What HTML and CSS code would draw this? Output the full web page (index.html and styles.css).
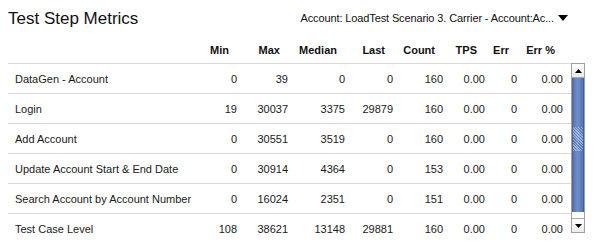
FILE: index.html
```html
<!DOCTYPE html>
<html>
<head>
<meta charset="utf-8">
<link rel="stylesheet" href="styles.css">
</head>
<body>
<div class="panel">
  <div class="top">
    <div class="title">Test Step Metrics</div>
    <div class="select">
      <span class="select-text">Account: LoadTest Scenario 3. Carrier - Account:Ac...</span>
      <svg class="caret" width="10" height="6" viewBox="0 0 10 6"><path d="M0 0H10L5 6Z" fill="#000"/></svg>
    </div>
  </div>
  <div class="head row">
    <div class="name"></div>
    <div>Min</div><div>Max</div><div>Median</div><div>Last</div><div>Count</div><div>TPS</div><div>Err</div><div>Err %</div>
  </div>
  <div class="body">
    <div class="rows">
      <div class="row data"><div class="name">DataGen - Account</div><div>0</div><div>39</div><div>0</div><div>0</div><div>160</div><div>0.00</div><div>0</div><div>0.00</div></div>
      <div class="row data"><div class="name">Login</div><div>19</div><div>30037</div><div>3375</div><div>29879</div><div>160</div><div>0.00</div><div>0</div><div>0.00</div></div>
      <div class="row data"><div class="name">Add Account</div><div>0</div><div>30551</div><div>3519</div><div>0</div><div>160</div><div>0.00</div><div>0</div><div>0.00</div></div>
      <div class="row data"><div class="name">Update Account Start &amp; End Date</div><div>0</div><div>30914</div><div>4364</div><div>0</div><div>153</div><div>0.00</div><div>0</div><div>0.00</div></div>
      <div class="row data"><div class="name">Search Account by Account Number</div><div>0</div><div>16024</div><div>2351</div><div>0</div><div>151</div><div>0.00</div><div>0</div><div>0.00</div></div>
      <div class="row data"><div class="name">Test Case Level</div><div>108</div><div>38621</div><div>13148</div><div>29881</div><div>160</div><div>0.00</div><div>0</div><div>0.00</div></div>
    </div>
    <div class="scrollbar">
      <div class="sb-btn"><svg width="7" height="4" viewBox="0 0 7 4"><path d="M0 4H7L3.5 0Z" fill="#000"/></svg></div>
      <div class="sb-thumb"><div class="grip"></div></div>
      <div class="sb-track"></div>
      <div class="sb-btn"><svg width="7" height="4" viewBox="0 0 7 4"><path d="M0 0H7L3.5 4Z" fill="#000"/></svg></div>
    </div>
  </div>
</div>
</body>
</html>
```

FILE: styles.css
```css
html, body {
  margin: 0;
  padding: 0;
  background: #fff;
}
.panel {
  width: 599px;
  height: 249px;
  overflow: hidden;
  font-family: "Liberation Sans", Arial, sans-serif;
  color: #1a1a1a;
}
.top {
  display: flex;
  justify-content: space-between;
  align-items: center;
  height: 36px;
  padding: 0 31px 0 8px;
}
.title {
  font-size: 17px;
  color: #111;
  padding-top: 1px;
}
.select {
  display: flex;
  align-items: center;
  gap: 4px;
  font-size: 11px;
  color: #111;
}
.select-text {
  letter-spacing: -0.12px;
}
.caret {
  display: block;
}
.row {
  display: grid;
  grid-template-columns: 182px 40px 51px 57px 48px 50px 42px 32px 46px;
  width: 547px;
  padding: 0 9px 0 7px;
  font-size: 11px;
}
.row > div {
  text-align: right;
  white-space: nowrap;
}
.row > .name {
  text-align: left;
}
.head {
  font-weight: bold;
  height: 27px;
  align-items: center;
  color: #111;
}
.body {
  display: flex;
  margin-left: 8px;
  width: 578px;
}
.rows {
  width: 563px;
}
.data {
  height: 29px;
  align-items: center;
  border-top: 1px solid #d9d9d9;
  padding-left: 7px;
  margin: 0;
  width: 547px;
}
.data > div {
  padding-top: 1px;
}
.scrollbar {
  width: 14px;
  height: 170px;
  display: flex;
  flex-direction: column;
  border: 1px solid #a0a0a0;
  box-sizing: border-box;
  background: #fff;
}
.sb-btn {
  height: 13px;
  display: flex;
  align-items: center;
  justify-content: center;
  background: linear-gradient(#fff, #eaeaea);
  border-bottom: 1px solid #a9a9a9;
}
.sb-btn:last-child {
  border-bottom: none;
  border-top: 1px solid #a9a9a9;
}
.sb-btn svg {
  display: block;
}
.sb-thumb {
  height: 134px;
  background: linear-gradient(90deg, #5572b0, #7090cc 45%, #5473b0);
  border-left: 1px solid #4767a7;
  border-right: 1px solid #3f5f9c;
  display: flex;
  align-items: center;
  justify-content: center;
}
.grip {
  width: 10px;
  height: 24px;
  margin-top: -12px;
  background-image: repeating-linear-gradient(45deg, rgba(255,255,255,0.35) 0 1px, transparent 1px 2px);
}
.sb-track {
  flex: 1;
  background: #fff;
}
```
